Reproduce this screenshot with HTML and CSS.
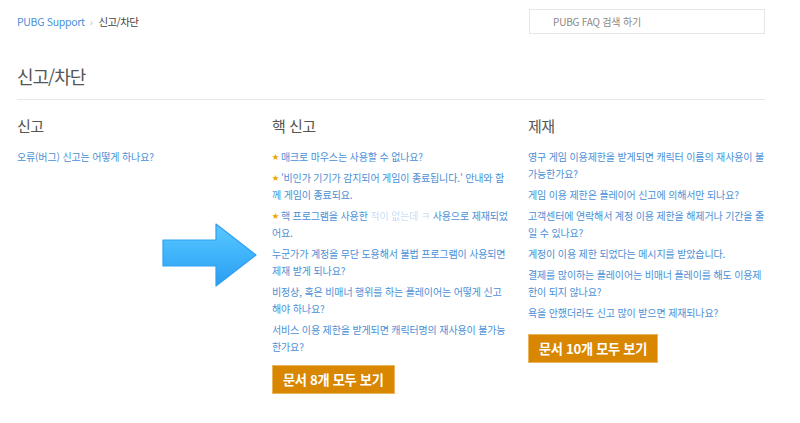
FILE: index.html
```html
<!DOCTYPE html>
<html lang="ko">
<head>
<meta charset="utf-8">
<title>신고/차단</title>
<link rel="stylesheet" href="styles.css">
</head>
<body>
<div class="page">
  <header class="top">
    <nav class="crumbs"><a class="crumb-link">PUBG Support</a><span class="sep">›</span><span class="crumb-cur">신고/차단</span></nav>
    <div class="search"><span class="placeholder">PUBG FAQ 검색 하기</span></div>
  </header>
  <h1 class="title">신고/차단</h1>
  <div class="cols">
    <section class="col">
      <h2 class="col-head">신고</h2>
      <ul class="list">
        <li><a>오류(버그) 신고는 어떻게 하나요?</a></li>
      </ul>
    </section>
    <section class="col">
      <h2 class="col-head">핵 신고</h2>
      <ul class="list">
        <li><a class="starred">매크로 마우스는 사용할 수 없나요?</a></li>
        <li><a class="starred">'비인가 기기가 감지되어 게임이 종료됩니다.' 안내와 함께 게임이 종료되요.</a></li>
        <li><a class="starred">핵 프로그램을 사용한 <span class="blur">적이 없는데 ㅋ</span> 사용으로 제재되었어요.</a></li>
        <li><a>누군가가 계정을 무단 도용해서 불법 프로그램이 사용되면 제재 받게 되나요?</a></li>
        <li><a>비정상, 혹은 비매너 행위를 하는 플레이어는 어떻게 신고해야 하나요?</a></li>
        <li class="last"><a>서비스 이용 제한을 받게되면 캐릭터명의 재사용이 불가능한가요?</a></li>
      </ul>
      <a class="btn">문서 8개 모두 보기</a>
    </section>
    <section class="col">
      <h2 class="col-head">제재</h2>
      <ul class="list">
        <li><a>영구 게임 이용제한을 받게되면 캐릭터 이름의 재사용이 불가능한가요?</a></li>
        <li><a>게임 이용 제한은 플레이어 신고에 의해서만 되나요?</a></li>
        <li><a>고객센터에 연락해서 계정 이용 제한을 해제거나 기간을 줄일 수 있나요?</a></li>
        <li><a>계정이 이용 제한 되었다는 메시지를 받았습니다.</a></li>
        <li><a>결제를 많이하는 플레이어는 비매너 플레이를 해도 이용제한이 되지 않나요?</a></li>
        <li><a>욕을 안했더라도 신고 많이 받으면 제재되나요?</a></li>
      </ul>
      <a class="btn">문서 10개 모두 보기</a>
    </section>
  </div>
</div>
<svg class="arrow" width="100" height="70" viewBox="0 0 100 70" aria-hidden="true">
  <defs>
    <linearGradient id="ag" x1="0" y1="0" x2="0" y2="1">
      <stop offset="0" stop-color="#5cc8ff"/>
      <stop offset="0.5" stop-color="#3fb4fb"/>
      <stop offset="1" stop-color="#2a9cf0"/>
    </linearGradient>
  </defs>
  <polygon points="2,17 55,17 55,1 95,32 55,63 55,43 2,43" fill="url(#ag)" stroke="#2f9ff2" stroke-width="1.2" stroke-linejoin="round"/>
</svg>
</body>
</html>
```
FILE: styles.css
```css
html, body {
  margin: 0;
  padding: 0;
  background: #fff;
}
body {
  font-family: "Noto Sans CJK KR", "Noto Sans", sans-serif;
  color: #444;
  position: relative;
  width: 800px;
  height: 423px;
  overflow: hidden;
}
.page {
  padding: 9px 35px 0 17px;
}
.top {
  display: flex;
  justify-content: space-between;
  align-items: center;
  height: 25px;
}
.crumbs {
  font-size: 10.5px;
  letter-spacing: -0.3px;
  display: flex;
  align-items: center;
}
.crumb-link {
  color: #4a90d9;
}
.sep {
  color: #bbb;
  font-size: 10px;
  margin: 0 6px 0 5px;
}
.crumb-cur {
  color: #444;
  letter-spacing: -0.6px;
}
.search {
  width: 234px;
  height: 23px;
  border: 1px solid #e6e6e6;
  display: flex;
  align-items: center;
  box-sizing: content-box;
}
.placeholder {
  font-size: 10px;
  color: #888;
  padding-left: 23px;
  letter-spacing: -0.2px;
}
.title {
  font-weight: 400;
  font-size: 18px;
  letter-spacing: -1px;
  color: #555;
  margin: 30px 0 0;
  padding-bottom: 11px;
  line-height: 24px;
  border-bottom: 1px solid #e8e8e8;
}
.cols {
  display: grid;
  grid-template-columns: 255px 256px 1fr;
  margin-right: -3px;
  padding-top: 15px;
}
.col {
  padding-right: 18px;
}
.col:last-child {
  padding-right: 0;
}
.col-head {
  font-weight: 400;
  font-size: 15px;
  color: #555;
  letter-spacing: -0.5px;
  margin: 0 0 11px;
  line-height: 22px;
}
.list {
  list-style: none;
  margin: 0;
  padding: 0;
}
.list li {
  font-size: 10px;
  line-height: 17px;
  margin-bottom: 4px;
  letter-spacing: -0.14px;
}
.list li.last {
  margin-bottom: 1px;
}
.list a {
  color: #4a8fd6;
}
.starred::before {
  content: "★";
  color: #f0a500;
  font-size: 7px;
  line-height: 17px;
  vertical-align: top;
  margin-right: 2px;
}
.blur {
  color: #c9dcf2;
  filter: blur(0.6px);
}
.btn {
  display: inline-flex;
  align-items: center;
  justify-content: center;
  margin-top: 9px;
  height: 29px;
  padding: 0 10px;
  background: #d98600;
  border: 1px solid #e9b55c;
  box-sizing: border-box;
  color: #fff;
  font-weight: 700;
  font-size: 13.2px;
  letter-spacing: -0.3px;
}
.arrow {
  position: absolute;
  left: 161px;
  top: 223px;
}
```
